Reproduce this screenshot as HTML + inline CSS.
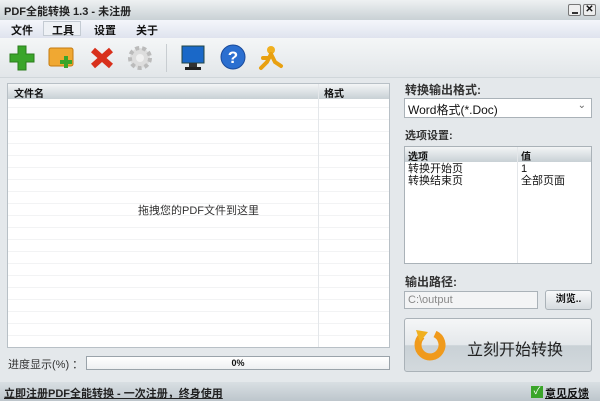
<!DOCTYPE html>
<html><head><meta charset="utf-8"><style>
*{margin:0;padding:0;box-sizing:border-box}
body{width:600px;height:401px;overflow:hidden;background:#e4e8eb;font-family:"Liberation Sans","Noto Sans CJK SC",sans-serif;font-size:11px;color:#111;position:relative}
.a{position:absolute}
.title{left:0;top:0;width:600px;height:20px;background:linear-gradient(#eef1f2,#c9d1d5);font-size:11px;font-weight:bold;padding:3px 0 0 4px;color:#222}
.menu{left:0;top:20px;width:600px;height:18px;background:linear-gradient(#f4f6fb,#dfe3ee)}
.menu span{position:absolute;top:2px;font-weight:bold;font-size:11px}
.tb{left:0;top:38px;width:600px;height:40px;background:linear-gradient(#f4f6f7,#e2e6e9);border-bottom:1px solid #d0d6da}
.list{left:7px;top:83px;width:383px;height:265px;background:#fff;border:1px solid #b8c0c6;
background-image:repeating-linear-gradient(#fff 0,#fff 11px,#f2f3f4 11px,#f2f3f4 12px);}
.hdr{left:0;top:0;width:100%;height:15px;background:linear-gradient(#f3f5f6,#c8d0d5);font-weight:bold;font-size:10px;padding:1px 0 0 6px}
.btn{background:linear-gradient(#f8f9fa,#d6dbdf);border:1px solid #aab2b8;border-radius:3px}
</style></head><body>
<div class="a title">PDF全能转换 1.3 - 未注册</div>
<div class="a" style="left:568px;top:4px;width:13px;height:12px;border:1px solid #777;background:#eee;border-radius:2px"><div class="a" style="left:3px;top:7px;width:6px;height:2px;background:#333"></div></div>
<div class="a" style="left:583px;top:4px;width:13px;height:12px;border:1px solid #777;background:#eee;border-radius:2px;font-size:10px;line-height:10px;text-align:center;font-weight:bold">✕</div>
<div class="a menu">
<span style="left:11px">文件</span>
<div class="a" style="left:43px;top:1px;width:38px;height:15px;border:1px solid #c4cbd3;background:#eef1f5"></div>
<span style="left:52px">工具</span><span style="left:94px">设置</span><span style="left:136px">关于</span></div>
<div class="a tb">
<svg class="a" style="left:8px;top:6px" width="28" height="28"><path d="M10 2h8v8h8v8h-8v8h-8v-8H2v-8h8z" fill="#3aa52a" stroke="#2a7d1c"/></svg>
<svg class="a" style="left:47px;top:6px" width="30" height="28"><rect x="2" y="4" width="24" height="18" rx="2" fill="#f0a832" stroke="#c47a10"/><path d="M17 12h4v4h4v4h-4v4h-4v-4h-4v-4h4z" fill="#3aa52a"/></svg>
<svg class="a" style="left:89px;top:8px" width="26" height="24"><path d="M4 4l18 16M22 4L4 20" stroke="#d8301c" stroke-width="6"/></svg>
<svg class="a" style="left:127px;top:7px" width="26" height="26"><circle cx="13" cy="13" r="10" fill="#ddd" stroke="#bbb" stroke-width="4" stroke-dasharray="4 3"/><circle cx="13" cy="13" r="4" fill="#f0f0f0"/></svg>
<div class="a" style="left:166px;top:6px;width:1px;height:28px;background:#c8cdd1"></div>
<svg class="a" style="left:180px;top:7px" width="26" height="26"><rect x="2" y="1" width="22" height="17" fill="#1a68c8" stroke="#244"/><rect x="9" y="18" width="8" height="4" fill="#333"/><rect x="5" y="22" width="16" height="3" fill="#222"/></svg>
<svg class="a" style="left:220px;top:6px" width="26" height="26"><circle cx="13" cy="13" r="12" fill="#2b6fd0" stroke="#1a4a9a"/><text x="13" y="19" font-size="17" font-weight="bold" fill="#fff" text-anchor="middle" font-family="Liberation Sans">?</text></svg>
<svg class="a" style="left:258px;top:6px" width="26" height="28"><circle cx="13" cy="6" r="4" fill="#f0b020"/><path d="M13 10l-4 8-6 6M13 10l4 8 6 4M11 14l-6 0" stroke="#e8a010" stroke-width="4" fill="none" stroke-linecap="round"/></svg>
</div>
<div class="a list"><div class="a hdr">文件名</div><div class="a" style="left:310px;top:0;width:1px;height:100%;background:#e4e7ea"></div><div class="a" style="left:316px;top:1px;font-weight:bold;font-size:10px">格式</div>
<div class="a" style="left:0;top:118px;width:100%;text-align:center;font-size:11px;color:#333">拖拽您的PDF文件到这里</div></div>
<div class="a" style="left:8px;top:356px;font-size:11px;color:#333">进度显示(%) ：</div>
<div class="a" style="left:86px;top:356px;width:304px;height:14px;border:1px solid #9aa3aa;background:linear-gradient(#fff,#eef0f2);text-align:center;font-size:9px;font-weight:bold;line-height:12px">0%</div>
<div class="a" style="left:0;top:382px;width:600px;height:19px;background:linear-gradient(#d9dfe3,#bdc6cc)"></div>
<div class="a" style="left:4px;top:385px;font-weight:bold;font-size:11px;text-decoration:underline;color:#222">立即注册PDF全能转换 - 一次注册，终身使用</div>
<div class="a" style="left:531px;top:386px;width:12px;height:12px;background:#3aa52a;color:#fff;font-size:10px;line-height:12px;text-align:center">✓</div>
<div class="a" style="left:545px;top:385px;font-size:11px;text-decoration:underline;font-weight:bold">意见反馈</div>
<div class="a" style="left:405px;top:81px;font-size:12px;font-weight:bold;color:#333">转换输出格式:</div>
<div class="a" style="left:404px;top:98px;width:188px;height:20px;background:#fff;border:1px solid #aab2b8;font-size:12px;padding:2px 0 0 3px">Word格式(*.Doc)<span class="a" style="right:5px;top:1px;color:#666;font-size:10px">⌄</span></div>
<div class="a" style="left:405px;top:127px;font-size:11px;font-weight:bold;color:#333">选项设置:</div>
<div class="a" style="left:404px;top:146px;width:188px;height:118px;background:#fff;border:1px solid #aab2b8">
<div class="a hdr" style="padding-left:3px">选项</div><div class="a" style="left:116px;top:1px;font-weight:bold;font-size:10px">值</div>
<div class="a" style="left:112px;top:0;width:1px;height:100%;background:#e4e7ea"></div>
<div class="a" style="left:3px;top:16px;line-height:12px">转换开始页<br>转换结束页</div>
<div class="a" style="left:116px;top:16px;line-height:12px">1<br>全部页面</div></div>
<div class="a" style="left:405px;top:273px;font-size:12px;font-weight:bold;color:#333">输出路径:</div>
<div class="a" style="left:404px;top:291px;width:134px;height:18px;background:#f3f4f5;border:1px solid #aab2b8;color:#888;font-size:11px;padding:2px 0 0 3px">C:\output</div>
<div class="a btn" style="left:545px;top:290px;width:47px;height:20px;font-size:10px;font-weight:bold;text-align:center;line-height:18px">浏览..</div>
<div class="a btn" style="left:404px;top:318px;width:188px;height:54px;background:linear-gradient(#f5f6f7 0%,#e4e8eb 50%,#c9d1d6 51%,#d3d9dd 100%)"></div>
<svg class="a" style="left:413px;top:328px" width="36" height="36"><path d="M9 8A12 12 0 1 0 22 6" stroke="#f09a1c" stroke-width="7" fill="none"/><path d="M3 2l12 2-8 10z" fill="#f0b020"/></svg>
<div class="a" style="left:467px;top:336px;font-size:16px;color:#222">立刻开始转换</div>
</body></html>
